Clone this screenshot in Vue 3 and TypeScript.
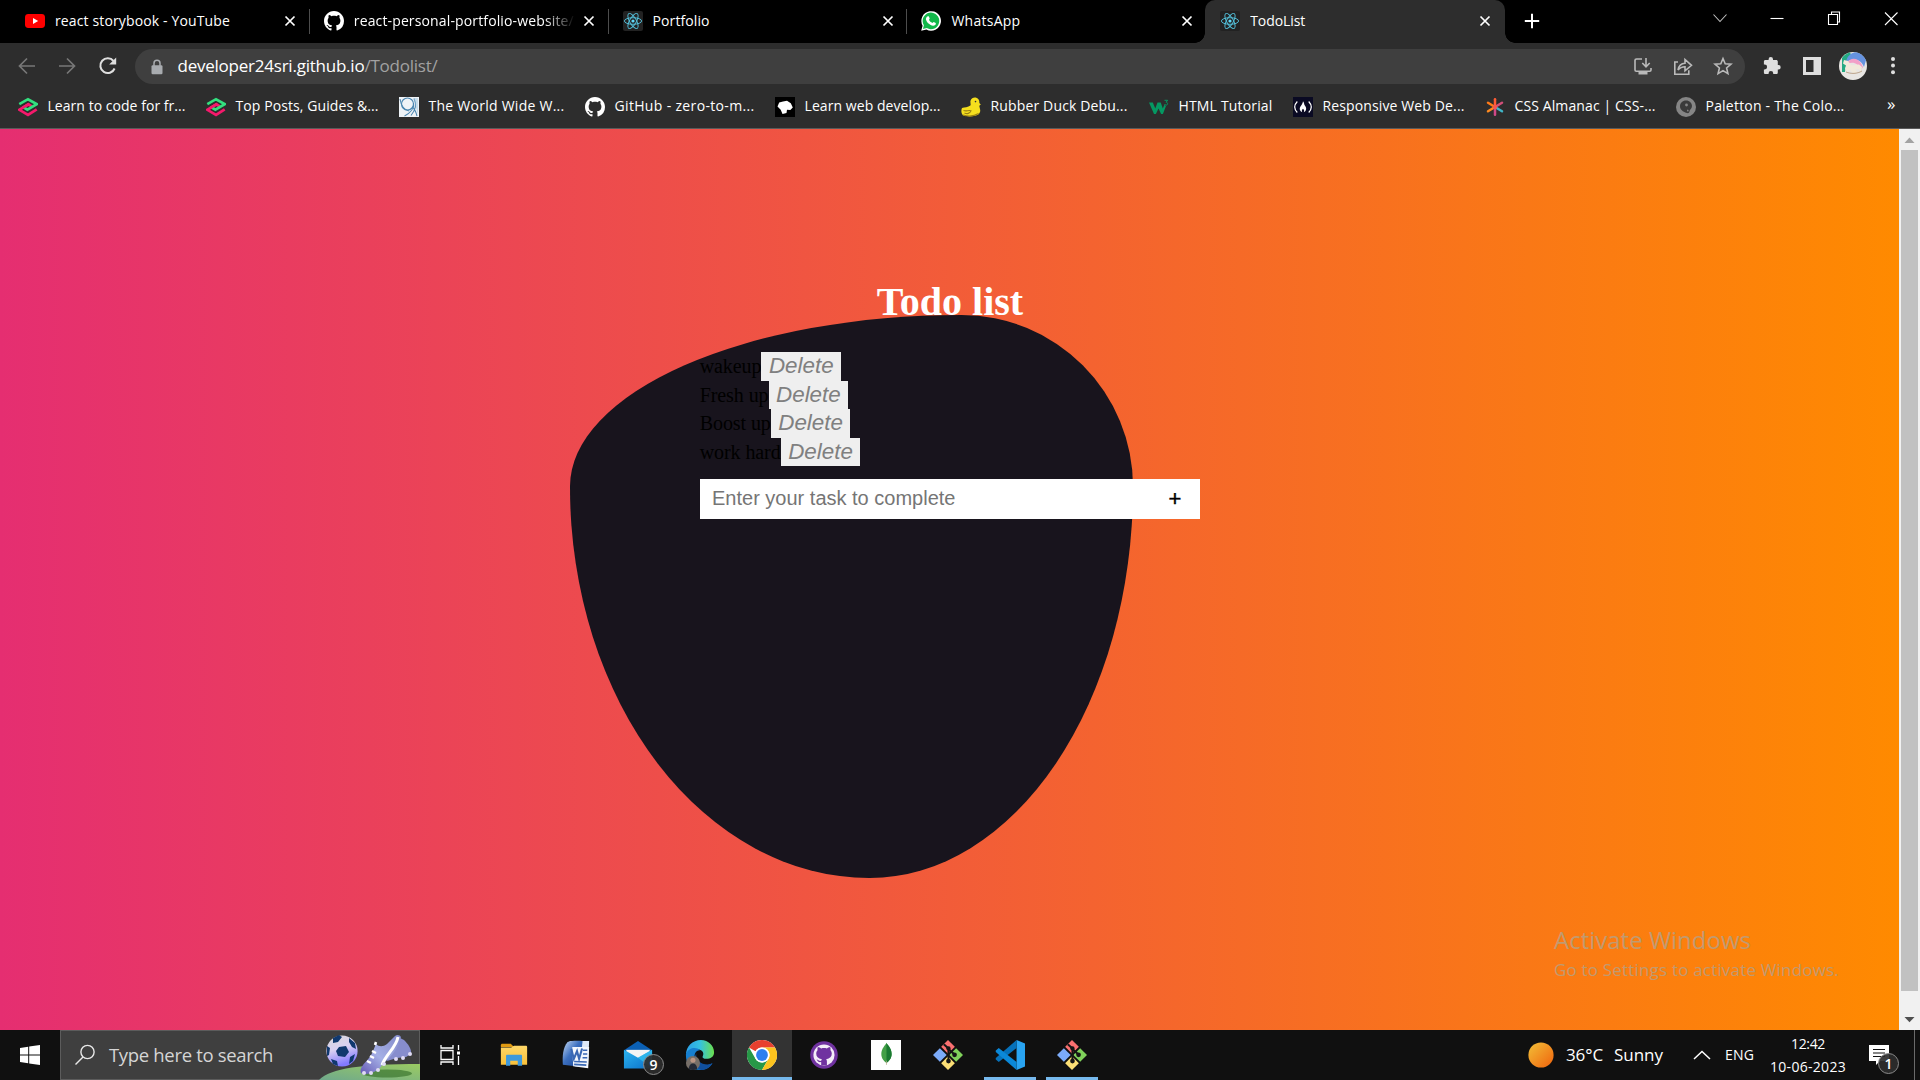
<script setup lang="ts">
import { ref } from 'vue'

interface Tab { icon: string; title: string; width: number; active?: boolean; divider?: boolean; fade?: boolean }
interface Bookmark { icon: string; label: string; width: number; slot: number }
interface TaskApp { icon: string; state?: 'open' | 'current' }

const tabs: Tab[] = [
  { icon: 'youtube', title: 'react storybook - YouTube', width: 175, divider: true },
  { icon: 'github', title: 'react-personal-portfolio-website/', width: 220, divider: true, fade: true },
  { icon: 'react', title: 'Portfolio', width: 57, divider: true },
  { icon: 'whatsapp', title: 'WhatsApp', width: 69 },
  { icon: 'react', title: 'TodoList', width: 55, active: true },
]

const bookmarks: Bookmark[] = [
  { icon: 'scrimba', label: 'Learn to code for fr...', width: 138, slot: 188 },
  { icon: 'scrimba', label: 'Top Posts, Guides &...', width: 143, slot: 193 },
  { icon: 'www', label: 'The World Wide W...', width: 136, slot: 186 },
  { icon: 'github', label: 'GitHub - zero-to-m...', width: 140, slot: 190 },
  { icon: 'odin', label: 'Learn web develop...', width: 136, slot: 186 },
  { icon: 'duck', label: 'Rubber Duck Debu...', width: 137, slot: 188 },
  { icon: 'w3', label: 'HTML Tutorial', width: 94, slot: 144 },
  { icon: 'fcc', label: 'Responsive Web De...', width: 142, slot: 192 },
  { icon: 'css', label: 'CSS Almanac | CSS-...', width: 141, slot: 191 },
  { icon: 'paletton', label: 'Paletton - The Colo...', width: 139, slot: 189 },
]

const apps: TaskApp[] = [
  { icon: 'explorer' },
  { icon: 'word' },
  { icon: 'mail' },
  { icon: 'edge' },
  { icon: 'chrome', state: 'current' },
  { icon: 'ghdesktop' },
  { icon: 'mongo' },
  { icon: 'git' },
  { icon: 'vscode', state: 'open' },
  { icon: 'git', state: 'open' },
]

const todos = ref<string[]>(['wakeup', 'Fresh up', 'Boost up', 'work hard'])
const draft = ref('')

function addTodo() {
  const text = draft.value.trim()
  if (text) todos.value.push(text)
  draft.value = ''
}

function removeTodo(index: number) {
  todos.value.splice(index, 1)
}

// Tracks a label out or in so that it takes exactly the given width.
const vFit = {
  mounted(el: HTMLElement, binding: { value: number }) {
    const count = (el.textContent ?? '').length
    const natural = el.getBoundingClientRect().width
    el.style.letterSpacing = `${(binding.value - natural) / count}px`
  },
}
</script>

<template>
  <svg class="defs" width="0" height="0" aria-hidden="true">
    <defs>
      <linearGradient id="g-boot" x1="0" y1="1" x2="1" y2="0"><stop offset="0" stop-color="#6458b4" /><stop offset=".45" stop-color="#a5b0e6" /><stop offset="1" stop-color="#8288c8" /></linearGradient>
      <linearGradient id="g-grass" x1="0" y1="1" x2="1" y2="0"><stop offset="0" stop-color="#6fa98c" /><stop offset="1" stop-color="#9bcb62" /></linearGradient>
      <linearGradient id="g-ball" x1="0" y1="0" x2=".3" y2="1"><stop offset="0" stop-color="#d8d8d8" /><stop offset=".5" stop-color="#d9d0f2" /><stop offset="1" stop-color="#8279ff" /></linearGradient>
      <linearGradient id="g-sun" x1="0" y1="0" x2="1" y2="1"><stop offset="0" stop-color="#f2c038" /><stop offset="1" stop-color="#f0620c" /></linearGradient>
      <linearGradient id="g-edge" x1="0" y1="0" x2="1" y2="0"><stop offset="0" stop-color="#2b9fe6" /><stop offset=".5" stop-color="#35c1e0" /><stop offset="1" stop-color="#6be04c" /></linearGradient>
      <linearGradient id="g-mail" x1="0" y1="0" x2="1" y2="1"><stop offset="0" stop-color="#2cb4f0" /><stop offset="1" stop-color="#0a6fc8" /></linearGradient>
      <linearGradient id="g-folder" x1="0" y1="0" x2="0" y2="1"><stop offset="0" stop-color="#ffd768" /><stop offset="1" stop-color="#f8c03a" /></linearGradient>
      <linearGradient id="g-word" x1="0" y1="0" x2="1" y2="1"><stop offset="0" stop-color="#c9dcf5" /><stop offset=".45" stop-color="#3c70c0" /><stop offset="1" stop-color="#16408f" /></linearGradient>
    </defs>
    <symbol id="youtube" viewBox="0 0 20 20"><rect x="0" y="3" width="20" height="14" rx="3.4" fill="#f00" /><path d="M8 7v6l5.2-3z" fill="#fff" /></symbol>
    <symbol id="github" viewBox="0 0 16 16"><path fill="#fff" d="M8 0C3.58 0 0 3.58 0 8c0 3.54 2.29 6.53 5.47 7.59.4.07.55-.17.55-.38 0-.19-.01-.82-.01-1.49-2.01.37-2.53-.49-2.69-.94-.09-.23-.48-.94-.82-1.13-.28-.15-.68-.52-.01-.53.63-.01 1.08.58 1.23.82.72 1.21 1.87.87 2.33.66.07-.52.28-.87.51-1.07-1.78-.2-3.64-.89-3.64-3.95 0-.87.31-1.59.82-2.15-.08-.2-.36-1.02.08-2.12 0 0 .67-.21 2.2.82.64-.18 1.32-.27 2-.27s1.36.09 2 .27c1.53-1.04 2.2-.82 2.2-.82.44 1.1.16 1.92.08 2.12.51.56.82 1.27.82 2.15 0 3.07-1.87 3.75-3.65 3.95.29.25.54.73.54 1.48 0 1.07-.01 1.93-.01 2.2 0 .21.15.46.55.38A8.01 8.01 0 0 0 16 8c0-4.42-3.58-8-8-8" /></symbol>
    <symbol id="react" viewBox="0 0 20 20"><rect width="20" height="20" rx="2" fill="#222" /><g fill="none" stroke="#53bfd9" stroke-width=".95"><ellipse cx="10" cy="10" rx="8.600" ry="3.300" /><ellipse cx="10" cy="10" rx="8.600" ry="3.300" transform="rotate(60 10 10)" /><ellipse cx="10" cy="10" rx="8.600" ry="3.300" transform="rotate(120 10 10)" /></g><circle cx="10" cy="10" r="1.600" fill="#61dafb" /></symbol>
    <symbol id="whatsapp" viewBox="0 0 20 20"><path d="M.2 19.800 1.600 14.700A9.800 9.800 0 1 1 5.400 18.500z" fill="#fff" /><path d="M1.900 18.100 2.900 14.300A8.300 8.300 0 1 1 5.800 17.100z" fill="#12b84a" /><path d="M6.900 5.200c.5-.1.900 0 1.100.5l.7 1.700c.1.500-.6 1-.8 1.400.8 1.500 1.900 2.500 3.500 3.200.4-.2.900-1.200 1.400-1.100l1.900 1c.4.300 0 1.700-.6 2.200-1.300 1-3.200.6-4.800-.3-2-1-3.700-2.900-4.300-5-.3-1.300.4-3.200 1.900-3.600z" fill="#fff" /></symbol>
    <symbol id="scrimba" viewBox="0 0 20 20"><g fill="none" stroke-width="2.700"><path d="M18.700 12.300 10 18 1.300 12.800 10.300 7.400l3.600 2.100" stroke="#f5196b" /><path d="M1.300 7.200 10 2.200l8.700 4.900-9.300 5.600L5.900 10.500" stroke="#33e07f" /><path d="m4.500 10.900 5.800-3.500 1.500.9" stroke="#f5196b" /></g></symbol>
    <symbol id="www" viewBox="0 0 20 20"><rect width="20" height="20" fill="#eff3f7" /><g fill="none" stroke="#4b86b0" stroke-width="1.100"><circle cx="8.500" cy="7" r="6" /><path d="M14.500 6c1 5-3 10-9 13M15 1.500c3 6 2 11-3 17M13 10c2 1 4 5 5 9M1 2c1 6 4 11 9 12" /></g><path d="M14.500 1h4.500v17z" fill="#9fc6de" opacity=".5" /></symbol>
    <symbol id="odin" viewBox="0 0 20 20"><rect width="20" height="20" fill="#000" /><path d="M2.500 9.500 4.200 5.500 8 4.600l4-.8 3.800 2.400 2 4.300-2.500 2.500-3.300-.2-.5 3.200-4 1-1.800-4.300z" fill="#fff" /></symbol>
    <symbol id="duck" viewBox="0 0 20 20"><path d="M9.500 3.800C10.400 1 13 0 15.300.7c2.500.7 3.300 3 3 5.200l1.500 1.500-1.500 1.300c0 1.600 1.400 3.600.8 6-.5 2.200-2.600 3.600-5.200 4.100-4 .9-8.600.8-12-.6-1.700-2-2-4.900-.9-7.200C3.600 10.200 7 10.600 9.400 8.600c.7-1.500-.4-3.200.1-4.800z" fill="#f5df1e" /><path d="M2.500 13.500c3 1.200 5-.6 7.500.3-1 2.700-4 3.400-6.500 2.200M2 18c5 1.500 11 1.300 15.600-1.500" fill="none" stroke="#9a8014" stroke-width="1.100" /><circle cx="14.500" cy="4.600" r=".8" fill="#333" /></symbol>
    <symbol id="w3" viewBox="0 0 20 20"><path d="M0 5.500h3.800l2.500 6 2.200-6h3.200l2.100 6 1.600-3.800 1.500 1.500-3 7.800h-1.800L9.500 11.500l-2.600 5.500H5z" fill="#059862" /><path d="M15.500 3.300h3.200l-1.600 1.900c2 .1 2 2.900 0 2.900-.9 0-1.400-.4-1.700-1" fill="none" stroke="#059862" /></symbol>
    <symbol id="fcc" viewBox="0 0 20 20"><rect width="20" height="20" fill="#0a0a23" /><path d="M4.300 4.500c-3.300 3.500-3.300 7.500 0 11M15.700 4.500c3.300 3.500 3.300 7.500 0 11" fill="none" stroke="#fff" stroke-width="1.200" /><path d="M10 4.300c1.600 1.700.8 3.200 2 4.500 2.200 2.500 1 5.500-1.200 6.500.7-1.600.3-2.700-.8-3.600-1.100.9-1.500 2-.8 3.600-2.200-1-3.400-3.500-1.400-6.200C9 7.600 9.600 6.300 10 4.300z" fill="#fff" /></symbol>
    <symbol id="css" viewBox="0 0 20 20"><g stroke-width="2.500" stroke-linecap="round"><path d="M10 10V2.300" stroke="#ff5c35" /><path d="m10 10-7-4.300" stroke="#ff7a18" /><path d="m10 10-7 4.300" stroke="#ff8a20" /><path d="m10 10 7-4.300" stroke="#d14f79" /><path d="m10 10 7 4.300" stroke="#40b5c8" /><path d="M10 10v7.700" stroke="#cf4888" /></g><circle cx="10" cy="10" r="2.200" fill="#f4574f" /></symbol>
    <symbol id="paletton" viewBox="0 0 20 20"><circle cx="10" cy="10" r="10" fill="#858585" /><path d="M10 3.500c3.600 0 6 2.500 6 5.500 0 2.600-2.300 3.400-2.500 5.200-.2 1.500-1.200 2.300-2.700 1.800C6.700 14.800 4 12.500 4 9.300 4 6 6.600 3.500 10 3.500z" fill="#3a3a3a" /><circle cx="10.500" cy="8" r="1.400" fill="#858585" /><path d="M11.500 12.500c1.200.4 1.400 1.200.8 2-.7.200-1.300-.2-1.300-1z" fill="#858585" /></symbol>
    <symbol id="explorer" viewBox="0 0 32 32"><path d="M2 5.500C2 4.600 2.600 4 3.500 4h9l3.500 3.500h-14z" fill="#e09a12" /><path d="M2 8h11l3-2h12.500c.9 0 1.500.5 1.500 1.500V26.500H2z" fill="url(#g-folder)" /><path d="M7.500 27.500V17c0-.8.500-1.300 1.300-1.300h14.500c.8 0 1.300.5 1.300 1.300v10.500H20v-5.500h-8v5.500z" fill="#3d99dd" /></symbol>
    <symbol id="word" viewBox="0 0 32 32"><path d="M8 1h22l-1 25-2 3-12-1V4z" fill="#dfe9f7" /><path d="M7 2.200C11 .8 18 .7 23 1.200L20 28.500 2 26.500C1.300 18 2 8 7 2.200z" fill="url(#g-word)" /><path d="M12 7.500h18L29 30l-16-2z" fill="#f3f7fd" /><path d="m11 9.500 2.700 10.500 3.400-8 2.200 8L22.500 9" fill="none" stroke="#3a68b4" stroke-width="2.200" /><path d="M23.500 11H28M23.500 15H28M23 19h5M14 23l13.500.5M14 26l13 .8" stroke="#3a68b4" stroke-width="1.700" /></symbol>
    <symbol id="mail" viewBox="0 0 32 32"><path d="M1 11 16 1l15 10v4H1z" fill="#0b60b5" /><path d="M3.500 10.500h25v10h-25z" fill="#f4f4f4" /><path d="M1 10.500 16 19l15-8.500V30.500H1z" fill="url(#g-mail)" /><path d="m31 10.500-15 8.500 15 11.500z" fill="#39cdf5" opacity=".6" /></symbol>
    <symbol id="edge" viewBox="0 0 32 32"><path d="M1 16C1 7 8 0 17 0c8 0 14 6 14 13 0 5-4 7-8 7-3 0-5-1-4-3 1.500-3 0-6-4-7C9 8.500 3 11 1 16z" fill="url(#g-edge)" /><path d="M1 15c3-7 11-8 15-4-5 0-7 5-5 10 2 6 10 8 18 4-2 4-7 7-13 7C8 32 1 26 1 17z" fill="#167fd0" /><path d="M12 14c-1 7 5 12 12 12 2 0 4-.6 5.500-1.500C27 29 22.500 32 17 32c-6-2-9-10-5-18z" fill="#104f9d" /><circle cx="8.500" cy="24.500" r="7.500" fill="#776f68" /><circle cx="8.500" cy="21.500" r="2.700" fill="#ba9583" /><path d="M4 31c0-8 9-8 9 0-3 1.400-6 1.400-9 0z" fill="#252a36" /></symbol>
    <symbol id="chrome" viewBox="0 0 32 32"><circle cx="16" cy="16" r="16" fill="#fff" /><path d="M2.140 8A16 16 0 0 1 29.860 8H16a8 8 0 0 0-6.930 4z" fill="#e8402f" /><path d="M2.140 8A16 16 0 0 0 16 32l6.930-12a8 8 0 0 1-13.860 0z" fill="#279847" /><path d="M29.860 8A16 16 0 0 1 16 32l6.930-12A8 8 0 0 0 16 8z" fill="#fcc31e" /><circle cx="16" cy="16" r="8" fill="#fff" /><circle cx="16" cy="16" r="6.300" fill="#2d7ff0" /></symbol>
    <symbol id="ghdesktop" viewBox="0 0 32 32"><circle cx="16" cy="16" r="14.700" fill="#7032a0" /><circle cx="16" cy="16" r="11.300" fill="#f4edf8" /><path fill="#7032a0" d="M13 27v-3.500c-3 .7-4-1.500-5-2.800 2-.1 2.300 2 5 1.500l.7-1.700c-4-.5-6-2.500-6-6 0-1.500.5-2.800 1.400-3.700-.2-1.300-.1-2.400.3-3.300 1.400.1 2.700.7 3.600 1.500 2-.6 4-.6 6 0 .9-.8 2.200-1.400 3.600-1.500.4.900.5 2 .3 3.300.9.900 1.400 2.200 1.400 3.700 0 3.500-2 5.500-6 6 .6.600.8 1.500.8 2.500v4z" /></symbol>
    <symbol id="mongo" viewBox="0 0 32 32"><path d="M0 0h32v32H0z" fill="#fff" /><path d="M16.500 3c.7 2.500 5.500 5 5.500 12 0 5-3 7.500-5.500 9.500-2.500-2-5.500-4.500-5.500-9.500 0-6 4.500-9.500 5.500-12z" fill="#43a047" /><path d="M16.500 3c.7 2.500 5.500 5 5.500 12 0 5-3 7.500-5.500 9.500z" fill="#1b7a32" /><path d="M16.500 22v4.500" stroke="#b6a98a" stroke-width=".8" /></symbol>
    <symbol id="git" viewBox="0 0 32 32"><path d="m16 0 7.300 7.300L16 14.600 8.700 7.300z" fill="#fa7070" /><path d="m24.700 8.700 7.300 7.300-7.300 7.300-7.300-7.300z" fill="#80d25b" /><path d="m7.300 8.700 7.300 7.300-7.300 7.300L0 16z" fill="#7cabf9" /><path d="m16 17.400 7.300 7.300L16 32l-7.300-7.300z" fill="#fcdf76" /><path d="m11.500 4.500 5 4.500v14M16.500 9.500l7 6.500" fill="none" stroke="#151515" stroke-width="2.200" /><g fill="#151515"><circle cx="16.500" cy="9" r="2.300" /><circle cx="23" cy="15.800" r="2.500" /><circle cx="16.500" cy="22.500" r="2.500" /></g></symbol>
    <symbol id="vscode" viewBox="0 0 32 32"><path d="M23 0 32 3.800v24.400L23 32z" fill="#29a4f2" /><path d="M23 0v8.500L4 23.500 .8 20.700v-1.500z" fill="#0671ba" /><path d="M23 32v-8.500L4 8.500.8 11.300v1.500z" fill="#0b88d8" /></symbol>
  </svg>

  <div class="screen">
    <header class="browser">
      <div class="tabstrip">
        <div v-for="(tab, i) in tabs" :key="i" class="tab" :class="{ active: tab.active, divider: tab.divider }">
          <svg class="favicon"><use :href="'#' + tab.icon" /></svg>
          <span class="title" :class="{ fade: tab.fade }"><span v-fit="tab.width">{{ tab.title }}</span></span>
          <svg class="close" viewBox="0 0 12 12"><path d="m1.500 1.500 9 9m0-9-9 9" /></svg>
        </div>
        <svg class="plus" viewBox="0 0 16 16"><path d="M8 .8v14.400M.8 8h14.400" /></svg>
        <div class="window-controls">
          <svg viewBox="0 0 16 16"><path d="M1.500 4.500 8 11.500l6.500-7" opacity=".75" /></svg>
          <svg viewBox="0 0 16 16"><path d="M1.500 8.500h13" /></svg>
          <svg viewBox="0 0 16 16"><path d="M2.500 4.500h9v10h-9zM5.500 4.500v-2.500h8v10h-2" /></svg>
          <svg viewBox="0 0 16 16"><path d="m2 2.500 12.500 12.500M14.500 2.500 2 15" /></svg>
        </div>
      </div>

      <div class="toolbar">
        <svg class="nav dim" viewBox="0 0 20 20"><path d="M18 10H3M10 2.500 2.500 10l7.500 7.500" /></svg>
        <svg class="nav dim" viewBox="0 0 20 20"><path d="M2 10h15M10 2.500l7.500 7.500-7.500 7.500" /></svg>
        <svg class="nav" viewBox="0 0 20 20"><path d="M16.600 12.500A7.400 7.400 0 1 1 15.500 5" /><path d="M18.200 1.500v7h-7z" fill="#dedede" stroke="none" /></svg>
        <div class="omnibox">
          <svg class="lock" viewBox="0 0 12 16"><path d="M3 7V4.300a3 3 0 0 1 6 0V7" fill="none" stroke="#a8abaf" stroke-width="1.500" /><rect x=".5" y="6.300" width="11" height="9" rx="1.200" fill="#a8abaf" /></svg>
          <span v-fit="260" class="url">developer24sri.github.io<span class="path">/Todolist/</span></span>
          <div class="page-actions">
            <svg viewBox="0 0 20 20"><path d="M9 3H3.500C2.500 3 2 3.500 2 4.200V14c0 .8.500 1.200 1.300 1.200h13.400c.8 0 1.300-.4 1.300-1.200v-2" /><path d="M13 2v8.500M9.300 7l3.700 3.800L16.700 7" /><path d="M5.500 15h9v3.500h-9z" fill="#bababa" stroke="none" /></svg>
            <svg viewBox="0 0 20 20"><path d="M5 6H1.800v12.300h14v-4" /><path d="M5 14c.8-4.500 3.300-6.500 7-6.700V3.500l6.500 5.800-6.500 5.500v-4C9 10.800 7 11.500 5 14z" /></svg>
            <svg viewBox="0 0 20 20"><path d="m10 2.500 2.200 5.200 5.800.5-4.400 3.800 1.300 5.600-4.900-3-4.900 3L6.400 12 2 8.200l5.800-.5z" /></svg>
          </div>
        </div>
        <div class="extensions">
          <svg viewBox="0 0 20 20"><path d="M16.500 9h-.7V5.600c0-1-.7-1.600-1.600-1.600H11v-.8a2.200 2.200 0 0 0-4.400 0V4H3.500C2.500 4 1.900 4.600 1.900 5.600v3h.8a2.400 2.400 0 0 1 0 4.800h-.8v3.100c0 1 .6 1.600 1.600 1.600h3.100v-.8a2.300 2.300 0 0 1 4.600 0v.8h3c1 0 1.600-.6 1.600-1.600v-3.100h.7a2.200 2.200 0 0 0 0-4.400z" fill="#dedede" /></svg>
          <svg viewBox="0 0 20 20"><path d="M1 1h18v18H1zM4 4v12h7.500V4z" fill="#dedede" fill-rule="evenodd" /></svg>
          <svg class="avatar" viewBox="0 0 28 28"><circle cx="14" cy="14" r="14" fill="#e8e6e3" /><path d="M3 20V6a14 14 0 0 1 8-5.800L13 5C8 8 7 13 6 20z" fill="#24aa83" /><path d="M7 10C8 4 12 1 16 .2c5 .4 9 3.600 11 8L25 15C22 8 16 5 7 10z" fill="#6693e0" /><path d="M8 11c4-6 10-5 14 0l2 4-2 3C19 11 14 9 8 12z" fill="#f2a0c8" /><path d="m5 8 4 1 3 4c3 1 5-1 8-.5l3 2.500-1 6-2-4-4 .5 3 3-5 1-3-4-4 2-1-3 1-3-3-2z" fill="#f1eadb" /><path d="M7 20c5 2 11 2 16-1" fill="none" stroke="#bca48c" /></svg>
          <svg class="dots" viewBox="0 0 20 20"><g fill="#dedede"><circle cx="10" cy="3" r="2" /><circle cx="10" cy="9.600" r="2" /><circle cx="10" cy="16.200" r="2" /></g></svg>
        </div>
      </div>

      <div class="bookmarks">
        <div v-for="(mark, i) in bookmarks" :key="i" class="bookmark" :style="{ width: mark.slot + 'px' }">
          <svg class="favicon"><use :href="'#' + mark.icon" /></svg>
          <span v-fit="mark.width">{{ mark.label }}</span>
        </div>
        <span class="more">»</span>
      </div>
    </header>

    <div class="viewport">
      <main class="page">
        <div class="blob"></div>
        <section class="todo">
          <h1>Todo list</h1>
          <ul>
            <li v-for="(item, i) in todos" :key="i">
              <span>{{ item }}</span><button type="button" @click="removeTodo(i)">Delete</button>
            </li>
          </ul>
          <form @submit.prevent="addTodo">
            <input v-model="draft" type="text" placeholder="Enter your task to complete" />
            <button type="submit">+</button>
          </form>
        </section>
      </main>
      <aside class="scrollbar">
        <svg viewBox="0 0 21 21"><path d="M5.500 14h10l-5-5.500z" fill="#a3a3a3" /></svg>
        <div class="thumb"></div>
        <svg viewBox="0 0 21 21"><path d="M5.500 8h10l-5 5.200z" fill="#505050" /></svg>
      </aside>
      <div class="watermark">
        <p class="big"><span v-fit="197">Activate Windows</span></p>
        <p class="small"><span v-fit="285">Go to Settings to activate Windows.</span></p>
      </div>
    </div>

    <footer class="taskbar">
      <div class="start"><svg viewBox="0 0 20 20"><path d="M0 2.900 8.200 1.800v7.700H0zM9.200 1.600 20 0v9.500H9.200zM0 10.500h8.200v7.700L0 17.100zM9.200 10.500H20V20L9.200 18.400z" fill="#fff" /></svg></div>
      <div class="search">
        <svg class="lens" viewBox="0 0 22 22"><circle cx="13.500" cy="8" r="6.600" /><path d="M9 13 1.500 20.500" /></svg>
        <span v-fit="164">Type here to search</span>
        <svg class="art" viewBox="0 0 101 49">
          <path d="M0 49C12 37 42 33 101 33v16z" fill="url(#g-grass)" />
          <ellipse cx="68" cy="42.500" rx="25" ry="4" fill="#35702a" opacity=".65" />
          <circle cx="23" cy="20" r="15.600" fill="url(#g-ball)" />
          <g fill="#10386e"><path d="m20 16 7-1 3 6-4 5-7-1-2-5z" /><path d="m14 7 6-3 3 2-4 5-5 1zM30 7l6 5 1 6-4-2-3-5zM8 15l3 2-1 7-2 1zM12 28l6 2 1 5-5-2zM31 26l5-3-2 7-4 3z" /></g>
          <path d="M73 12c4 1 6-2 8-5l4 2c4 4 8 9 7 14l-5 3-9 1-10 3z" fill="#878dcd" />
          <path d="M57 13c3 3 7 3 11 0l8-8c2-2 5-1 6 1-2 12-11 20-19 28-4 7-15 11-21 8-2-5 3-9 8-15 4-5 5-10 7-14z" fill="url(#g-boot)" />
          <path d="M79 6c-2 11-12 17-16 28" stroke="#fff" stroke-width="3" fill="none" />
          <path d="m57 11-1 3M53 20l4 2M51 25l4 2M48 30l4 2" stroke="#fff" stroke-width="2.500" fill="none" />
          <g fill="#e0dbf5"><circle cx="45" cy="42" r="2" /><circle cx="52" cy="42" r="2" /><circle cx="59" cy="39" r="2" /><circle cx="65" cy="33" r="2" /><circle cx="77" cy="28" r="2" /><circle cx="84" cy="27" r="2" /><circle cx="91" cy="23" r="2" /></g>
        </svg>
      </div>
      <div class="taskview"><svg viewBox="0 0 20 20"><path d="M1 0v3h12V0M1 20v-3h12v3M1 5.500h12v9H1zM18.500 0v5M18.500 11v9" fill="none" stroke="#fff" stroke-width="1.300" /><path d="M17 6.500h3v3h-3z" fill="#fff" /></svg></div>
      <div class="apps">
        <div v-for="(app, i) in apps" :key="i" class="app" :class="app.state">
          <svg><use :href="'#' + app.icon" /></svg>
          <b v-if="app.icon === 'mail'" class="badge">9</b>
        </div>
      </div>
      <div class="tray">
        <svg class="sun" viewBox="0 0 26 26"><circle cx="13" cy="13" r="12.600" fill="url(#g-sun)" /></svg>
        <div class="weather"><span v-fit="37">36°C</span><span v-fit="49">Sunny</span></div>
        <svg class="chevron" viewBox="0 0 18 10"><path d="m1 9 8-7.500L17 9" /></svg>
        <div class="lang"><span v-fit="29">ENG</span></div>
        <div class="clock"><span v-fit="34">12:42</span><span v-fit="76">10-06-2023</span></div>
        <div class="notice">
          <svg viewBox="0 0 22 22"><path d="M1 1h20v16h-9l-4 4v-4H1z" fill="#fff" /><path d="M5 5.500h12M5 9h12M5 12.500h12" stroke="#101010" stroke-width="1.200" /></svg>
          <b class="badge">1</b>
        </div>
        <i class="peek"></i>
      </div>
    </footer>
  </div>
</template>

<style>
html,
body {
  margin: 0;
  overflow: hidden;
  background: #000;
}
</style>

<style scoped>
.defs { position: absolute; }
.screen {
  width: 1920px;
  height: 1080px;
  display: flex;
  flex-direction: column;
  overflow: hidden;
  font-family: "Open Sans", "Noto Sans", sans-serif;
  color: #fff;
}
svg { display: block; flex: none; }
.favicon { width: 20px; height: 20px; }

/* Browser frame */
.browser { height: 129px; flex: none; background: #2d2d2d; box-sizing: border-box; border-bottom: 1px solid #5a5a5a; }
.tabstrip { height: 43px; background: #000; display: flex; padding-left: 9px; }
.tab {
  position: relative;
  width: 298.800px;
  height: 43px;
  box-sizing: border-box;
  flex: none;
  display: flex;
  align-items: center;
  padding: 0 11.500px 2px 16px;
  font-size: 14px;
  line-height: 20px;
  white-space: nowrap;
}
.tab.divider::after { content: ""; position: absolute; right: -2px; top: 9px; width: 1px; height: 25px; background: #4d4d4d; }
.tab .title { flex: 1; margin-left: 10px; overflow: hidden; }
.tab .title.fade { -webkit-mask-image: linear-gradient(90deg, #000 190px, transparent 221px); mask-image: linear-gradient(90deg, #000 190px, transparent 221px); }
.title > span, .bookmark > span { display: inline-block; }
.close { width: 12px; height: 12px; fill: none; stroke: #fff; stroke-width: 1.700; margin: 1px 0 0 9px; }
.tab.active { background: #2d2d2d; border-radius: 10px 10px 0 0; width: 300px; margin-left: 1px; padding-left: 15px; padding-right: 14px; }
.tab.active::before,
.tab.active::after { content: ""; position: absolute; bottom: 0; width: 10px; height: 10px; }
.tab.active::before { left: -10px; background: radial-gradient(circle at 0 0, transparent 9.500px, #2d2d2d 10px); }
.tab.active::after { right: -10px; background: radial-gradient(circle at 100% 0, transparent 9.500px, #2d2d2d 10px); }
.plus { width: 16px; height: 16px; margin: 13px 0 0 19px; stroke: #fff; stroke-width: 2; }
.window-controls { display: flex; margin-left: auto; gap: 41px; padding: 10px 21px 0 0; }
.window-controls svg { width: 16px; height: 16px; fill: none; stroke: #fff; stroke-width: 1.100; }

.toolbar { height: 48px; display: flex; align-items: center; padding-left: 17px; box-sizing: border-box; padding-bottom: 3px; }
.nav { width: 20px; height: 20px; margin-right: 20px; fill: none; stroke: #dedede; stroke-width: 2; }
.nav.dim { stroke: #777; stroke-width: 1.700; }
.nav:nth-child(3) { margin-left: 1px; margin-right: 17px; }
.omnibox { width: 1610px; height: 35px; margin-top: 2px; border-radius: 18px; background: #3f3f3f; display: flex; align-items: center; flex: none; }
.lock { width: 12px; height: 16px; margin-left: 16px; }
.url { margin-left: 14.500px; font-size: 17px; line-height: 24px; white-space: nowrap; padding-bottom: 2px; }
.path { color: #a2a2a2; }
.page-actions { display: flex; gap: 20px; margin-left: auto; padding: 0 12.500px 2px 0; }
.page-actions svg { width: 20px; height: 20px; fill: none; stroke: #bababa; stroke-width: 1.600; }
.extensions { display: flex; align-items: center; gap: 20px; margin-left: 17px; }
.extensions svg { width: 20px; height: 20px; }
.extensions .avatar { width: 28px; height: 28px; margin: 0 -3px; }
.extensions .dots { margin-left: -1px; }

.bookmarks { height: 37px; display: flex; align-items: center; padding: 1px 0 5px 18px; box-sizing: border-box; font-size: 14px; line-height: 20px; margin-top: -1px; }
.bookmark { display: flex; align-items: center; flex: none; gap: 9.500px; white-space: nowrap; }
.bookmark > span { padding-bottom: 1px; }
.more { margin-left: 22px; font-size: 17px; line-height: 16px; padding-bottom: 5px; }

/* Web page */
.viewport { position: relative; flex: 1; display: flex; min-height: 0; }
.page { position: relative; flex: 1; background: linear-gradient(to right, #e52e71, #ff8a00); }
.blob {
  position: absolute;
  left: 570px;
  top: 186px;
  width: 562.500px;
  height: 562.500px;
  background: #18141d;
  border-radius: 69.500% 30.500% 46.800% 53.200% / 30.500% 30.500% 69.500% 69.500%;
}
.todo { position: relative; width: 500px; margin: 0 auto; padding-top: 150px; left: 0.500px; color: #000; font-family: "Liberation Serif", serif; font-size: 20px; }
.todo h1 { margin: 0; height: 73px; text-align: center; font-size: 40px; line-height: 46px; color: #fff; }
.todo ul { list-style: none; margin: 0; padding: 0; }
.todo li { height: 28.500px; display: flex; line-height: 28px; }
.todo li span { letter-spacing: -.08px; margin-left: -.3px; }
.todo li button { border: 0; margin: 0; padding: 1px 7.500px 1px; height: 28.500px; background: #efefef; color: #808080; font: italic 22.400px/26px "Liberation Sans", sans-serif; }
.todo form { display: flex; margin-top: 13px; width: 500px; height: 40px; background: #fff; }
.todo input { flex: 1; min-width: 0; border: 0; outline: 0; padding: 0 12px 2px; background: transparent; font: 20px "Liberation Sans", sans-serif; }
.todo input::placeholder { color: #757575; }
.todo form button { width: 50px; border: 0; padding: 0 0 1px; background: transparent; font: 22px "Liberation Sans", sans-serif; -webkit-text-stroke: .4px #000; color: #000; }

.scrollbar { width: 21px; background: #f1f1f1; display: flex; flex-direction: column; }
.scrollbar svg { width: 21px; height: 21px; }
.thumb { height: 841px; margin: 0 2px 18px; background: #c1c1c1; }
.watermark { position: absolute; left: 1554px; top: 791px; color: #c19a70; white-space: nowrap; }
.watermark p { margin: 0; }
.watermark .big { font-size: 24px; line-height: 40px; }
.watermark .small { font-size: 17px; line-height: 20px; }

/* Taskbar */
.taskbar { height: 50px; flex: none; background: #101010; display: flex; }
.start { width: 60px; display: flex; align-items: center; justify-content: center; }
.start svg { width: 20px; height: 20px; }
.search { width: 360px; height: 50px; box-sizing: border-box; border: 1px solid #5c5c5c; background: #3f3f3f; display: flex; align-items: center; color: #d5d5d5; font-size: 18.500px; white-space: nowrap; }
.search span { padding-bottom: 1px; }
.lens { width: 22px; height: 22px; margin: 0 13px 0 13px; fill: none; stroke: #e8e8e8; stroke-width: 1.400; }
.art { width: 101px; height: 49px; margin-right: -1px; margin-left: auto; align-self: flex-start; }
.taskview { width: 63px; display: flex; align-items: center; justify-content: center; box-sizing: border-box; padding-right: 4px; }
.taskview svg { width: 20px; height: 20px; }
.apps { display: flex; }
.app { position: relative; width: 62px; display: flex; align-items: center; justify-content: center; }
.app svg { width: 30px; height: 30px; }
.app.current { background: linear-gradient(90deg, transparent 1px, #333 1px, #333 61px, transparent 61px); }
.app.open::after, .app.current::after { content: ""; position: absolute; left: 5px; right: 5px; bottom: 0; height: 3px; background: #76b9ed; }
.app.current::after { left: 1px; right: 1px; }
.badge { position: absolute; width: 19px; height: 19px; border: 1px solid #8a8a8a; border-radius: 50%; background: rgba(45, 45, 45, .92); font-size: 14px; line-height: 19px; text-align: center; font-weight: 600; }
.app .badge { right: 5px; bottom: 5px; }
.tray { display: flex; align-items: center; margin-left: auto; white-space: nowrap; }
.sun { width: 26px; height: 26px; margin-bottom: 1px; }
.weather { width: 127px; display: flex; gap: 11px; margin-left: 12px; font-size: 17px; padding-bottom: 1px; }
.chevron { width: 18px; height: 10px; fill: none; stroke: #fff; stroke-width: 1.500; }
.lang { width: 45px; margin-left: 14px; font-size: 14px; padding-bottom: 1px; }
.clock { width: 76px; display: flex; flex-direction: column; align-items: center; font-size: 14px; line-height: 23px; padding-bottom: 1px; }
.notice { position: relative; margin-left: 22px; width: 22px; height: 22px; }
.notice svg { width: 22px; height: 22px; }
.notice .badge { left: 10px; top: 9px; }
.peek { width: 1px; height: 50px; margin: 0 5px 0 24px; background: #6a6a6a; }
</style>
